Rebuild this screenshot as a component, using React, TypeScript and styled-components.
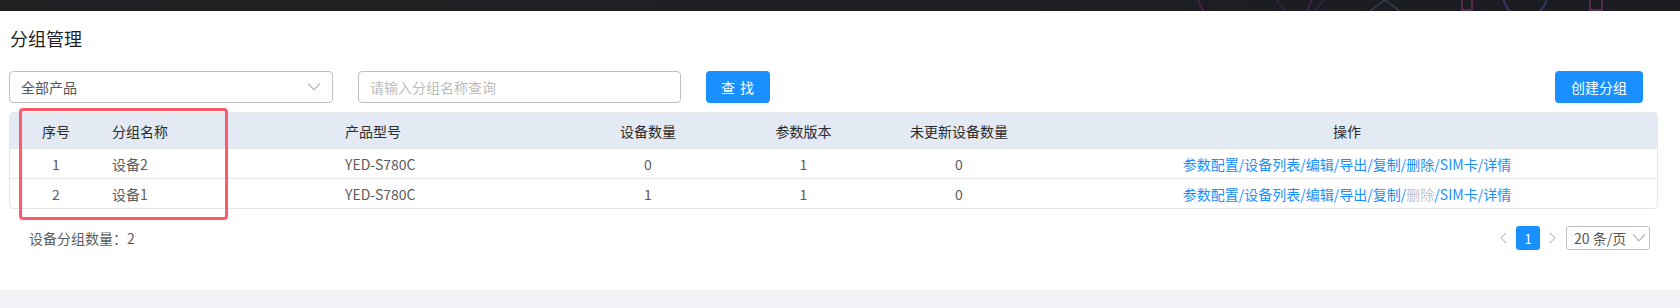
import React from "react";
import styled, { createGlobalStyle } from "styled-components";

const GlobalStyle = createGlobalStyle`
  html, body { margin: 0; padding: 0; background: #fff; }
  body {
    font-family: "Noto Sans CJK SC", "Noto Sans", "Liberation Sans", sans-serif;
    -webkit-font-smoothing: antialiased;
  }
  * { box-sizing: border-box; }
`;

const Page = styled.div`
  width: 1680px;
  height: 308px;
  display: flex;
  flex-direction: column;
  overflow: hidden;
`;

const TopBar = styled.div`
  height: 11px;
  flex: none;
  background: linear-gradient(90deg, #202123 0%, #1d1f22 50%, #1a1c22 100%);
  position: relative;
  overflow: hidden;
`;

const Decor = styled.svg`
  position: absolute;
  left: 0;
  top: 0;
`;

const Content = styled.div`
  flex: 1;
  position: relative;
  background: #fff;
  padding: 15px 22px 0 9px;
`;

const Title = styled.h1`
  margin: 0;
  padding-left: 1px;
  font-size: 18px;
  line-height: 24px;
  font-weight: 400;
  color: #1f1f1f;
`;

const Toolbar = styled.div`
  margin-top: 21px;
  height: 32px;
  display: flex;
  align-items: center;
  gap: 25px;
  padding-right: 15px;
`;

const Field = styled.div<{ $width: number }>`
  width: ${(p) => p.$width}px;
  height: 32px;
  border: 1px solid #bfbfbf;
  border-radius: 4px;
  padding: 0 11px;
  display: flex;
  align-items: center;
  justify-content: space-between;
  font-size: 14px;
  color: #555;
  background: #fff;
`;

const Placeholder = styled.span`
  color: #bdbdbd;
`;

const Button = styled.button<{ $width: number; $spaced?: boolean }>`
  width: ${(p) => p.$width}px;
  height: 32px;
  border: none;
  border-radius: 4px;
  background: #1890ff;
  color: #fff;
  font-family: inherit;
  font-size: 14px;
  letter-spacing: ${(p) => (p.$spaced ? "1px" : "0")};
  white-space: pre;
  padding: 0;
  cursor: pointer;
`;

const PushRight = styled.div`
  margin-left: auto;
`;

const Table = styled.div`
  margin-top: 9px;
  border: 1px solid #e6e6e6;
  border-radius: 4px;
  overflow: hidden;
`;

const cols = "92px 233px 235px 156px 155px 156px 1fr";

const HeadRow = styled.div`
  display: grid;
  grid-template-columns: ${cols};
  height: 35px;
  background: #e4eaf3;
  color: #2b2b2b;
  font-size: 14px;
`;

const BodyRow = styled.div`
  display: grid;
  grid-template-columns: ${cols};
  height: 30px;
  border-top: 1px solid #e6e6e6;
  color: #5c5c5c;
  font-size: 14px;
`;

const Cell = styled.div<{ $align?: "left" | "center" }>`
  display: flex;
  align-items: center;
  justify-content: ${(p) => (p.$align === "left" ? "flex-start" : "center")};
  padding-left: ${(p) => (p.$align === "left" ? "10px" : "0")};
  white-space: nowrap;
`;

const Link = styled.span<{ $disabled?: boolean }>`
  color: ${(p) => (p.$disabled ? "#c0c4cc" : "#1890ff")};
`;

const Sep = styled.span`
  color: #1890ff;
`;

const Footer = styled.div`
  margin-top: 17px;
  height: 24px;
  display: flex;
  align-items: center;
  justify-content: space-between;
  padding: 0 8px 0 20px;
`;

const Count = styled.span`
  font-size: 14px;
  color: #5c5c5c;
`;

const Pager = styled.div`
  display: flex;
  align-items: center;
`;

const Arrow = styled.span<{ $gapRight: number }>`
  width: 9px;
  height: 24px;
  display: flex;
  align-items: center;
  margin-right: ${(p) => p.$gapRight}px;
`;

const PageNo = styled.span`
  width: 24px;
  height: 24px;
  border-radius: 3px;
  background: #1890ff;
  color: #fff;
  font-size: 13px;
  display: flex;
  align-items: center;
  justify-content: center;
  margin-right: 8px;
`;

const SizeSelect = styled.div`
  width: 84px;
  height: 24px;
  border: 1px solid #c0c0c0;
  border-radius: 3px;
  display: flex;
  align-items: center;
  justify-content: space-between;
  padding: 0 3px 0 7px;
  font-size: 14px;
  color: #555;
`;

const Bottom = styled.div`
  height: 18px;
  flex: none;
  background: #f0f2f5;
`;

const Highlight = styled.div`
  position: absolute;
  left: 19px;
  top: 97px;
  width: 209px;
  height: 112px;
  border: 3px solid #ff5a6b;
  border-radius: 4px;
  pointer-events: none;
`;

const Chevron = ({ dir, size, color }: { dir: "down" | "left" | "right"; size: number; color: string }) => {
  const pts =
    dir === "down"
      ? "1,3 6,8.5 11,3"
      : dir === "left"
      ? "7,1 2,6 7,11"
      : "2,1 7,6 2,11";
  const w = dir === "down" ? 12 : 9;
  const h = dir === "down" ? 12 : 12;
  return (
    <svg width={(size * w) / 12} height={(size * h) / 12} viewBox={`0 0 ${w} ${h}`}>
      <polyline points={pts} fill="none" stroke={color} strokeWidth="1.1" />
    </svg>
  );
};

type Row = { no: number; name: string; model: string; count: number; ver: number; pending: number; delDisabled?: boolean };

const rows: Row[] = [
  { no: 1, name: "设备2", model: "YED-S780C", count: 0, ver: 1, pending: 0 },
  { no: 2, name: "设备1", model: "YED-S780C", count: 1, ver: 1, pending: 0, delDisabled: true },
];

const actions = ["参数配置", "设备列表", "编辑", "导出", "复制", "删除", "SIM卡", "详情"];

export default function App() {
  return (
    <>
      <GlobalStyle />
      <Page>
        <TopBar>
          <Decor width="1680" height="11" viewBox="0 0 1680 11">
            <circle cx="1255" cy="-20" r="60" fill="none" stroke="#5a2a5c" strokeWidth="2" opacity="0.6" />
            <circle cx="1300" cy="-10" r="25" fill="none" stroke="#4a2650" strokeWidth="2" opacity="0.5" />
            <path d="M1370 11 L1385 0 L1400 11" fill="none" stroke="#3b3f55" strokeWidth="1.5" />
            <rect x="1462" y="-4" width="10" height="14" fill="none" stroke="#6a2f5c" strokeWidth="1.5" />
            <circle cx="1525" cy="-5" r="22" fill="none" stroke="#3d3a70" strokeWidth="2" opacity="0.8" />
            <rect x="1590" y="-4" width="12" height="14" fill="none" stroke="#6a2f5c" strokeWidth="1.5" />
          </Decor>
        </TopBar>
        <Content>
          <Title>分组管理</Title>
          <Toolbar>
            <Field $width={324}>
              <span>全部产品</span>
              <Chevron dir="down" size={14} color="#b8b8b8" />
            </Field>
            <Field $width={323}>
              <Placeholder>请输入分组名称查询</Placeholder>
            </Field>
            <Button $width={64} $spaced>
              查 找
            </Button>
            <PushRight>
              <Button $width={88}>创建分组</Button>
            </PushRight>
          </Toolbar>
          <Table>
            <HeadRow>
              <Cell>序号</Cell>
              <Cell $align="left">分组名称</Cell>
              <Cell $align="left">产品型号</Cell>
              <Cell>设备数量</Cell>
              <Cell>参数版本</Cell>
              <Cell>未更新设备数量</Cell>
              <Cell>操作</Cell>
            </HeadRow>
            {rows.map((r) => (
              <BodyRow key={r.no}>
                <Cell>{r.no}</Cell>
                <Cell $align="left">{r.name}</Cell>
                <Cell $align="left">{r.model}</Cell>
                <Cell>{r.count}</Cell>
                <Cell>{r.ver}</Cell>
                <Cell>{r.pending}</Cell>
                <Cell>
                  {actions.map((a, i) => (
                    <React.Fragment key={a}>
                      {i > 0 && <Sep>/</Sep>}
                      <Link $disabled={a === "删除" && r.delDisabled}>{a}</Link>
                    </React.Fragment>
                  ))}
                </Cell>
              </BodyRow>
            ))}
          </Table>
          <Footer>
            <Count>设备分组数量：2</Count>
            <Pager>
              <Arrow $gapRight={8}>
                <Chevron dir="left" size={12} color="#c0c4cc" />
              </Arrow>
              <PageNo>1</PageNo>
              <Arrow $gapRight={9}>
                <Chevron dir="right" size={12} color="#c0c4cc" />
              </Arrow>
              <SizeSelect>
                <span>20 条/页</span>
                <Chevron dir="down" size={14} color="#b8b8b8" />
              </SizeSelect>
            </Pager>
          </Footer>
          <Highlight />
        </Content>
        <Bottom />
      </Page>
    </>
  );
}
